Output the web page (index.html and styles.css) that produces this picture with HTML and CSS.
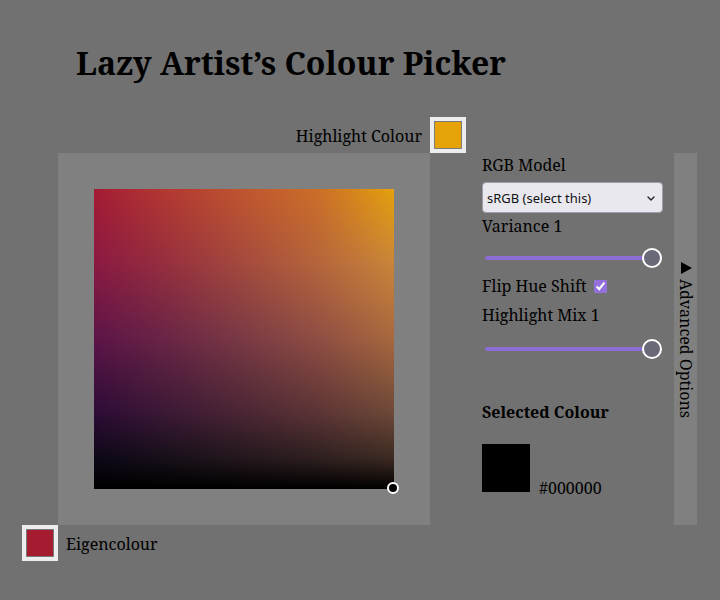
FILE: index.html
```html
<!DOCTYPE html>
<html lang="en">
<head>
<meta charset="utf-8">
<title>Lazy Artist’s Colour Picker</title>
<link rel="stylesheet" href="styles.css">
</head>
<body>
<main class="app">
  <h1 class="title">Lazy Artist’s Colour Picker</h1>
  <div class="layout">
    <label class="highlight-label">Highlight Colour</label>
    <div class="swatch highlight-swatch"><span class="swatch-fill highlight"></span></div>

    <div class="panel">
      <div class="field">
        <span class="band band-1"></span>
        <span class="band band-2"></span>
        <span class="band band-3"></span>
        <span class="band band-4"></span>
        <span class="band band-5"></span>
        <span class="cursor"></span>
      </div>
    </div>

    <div class="swatch eigen-swatch"><span class="swatch-fill eigen"></span></div>
    <label class="eigen-label">Eigencolour</label>

    <div class="controls">
      <label class="ctl-label">RGB Model</label>
      <div class="select-wrap">
        <select class="select"><option>sRGB (select this)</option></select>
        <svg class="chevron" width="8" height="5" viewBox="0 0 8 5"><path d="M1 1l3 3 3-3" fill="none" stroke="#222" stroke-width="1.4" stroke-linecap="round" stroke-linejoin="round"/></svg>
      </div>
      <label class="ctl-label variance">Variance 1</label>
      <input class="slider first-slider" type="range" min="0" max="1" step="0.01" value="1">
      <label class="check-row">Flip Hue Shift <input class="check" type="checkbox" checked></label>
      <label class="ctl-label mix">Highlight Mix 1</label>
      <input class="slider second-slider" type="range" min="0" max="1" step="0.01" value="1">
      <h2 class="selected-title">Selected Colour</h2>
      <div class="result"><span class="result-swatch"></span><span class="result-hex">#000000</span></div>
    </div>

    <div class="advanced">
      <svg class="tri" width="11" height="12" viewBox="0 0 11 12"><path d="M0 0L11 6L0 12z" fill="#000"/></svg>
      <span class="advanced-text">Advanced Options</span>
    </div>
  </div>
</main>
</body>
</html>
```

FILE: styles.css
```css
* { box-sizing: border-box; }
html, body { margin: 0; }
body {
  background: #717171;
  color: #000;
  font-family: "Noto Serif", "DejaVu Serif", serif;
  font-size: 16px;
  line-height: 22px;
}
.app {
  width: 720px;
  height: 600px;
  padding-left: 22px;
}
.title {
  margin: 0 0 32px 0;
  padding: 41px 0 0 54px;
  font-size: 32px;
  line-height: 44px;
  font-weight: 700;
}
.layout {
  display: grid;
  grid-template-columns: 36px 372px 36px 16px 181px 11px 23px;
  grid-template-rows: 36px 372px 36px;
}
.highlight-label {
  grid-column: 2;
  grid-row: 1;
  justify-self: end;
  align-self: center;
  margin-right: 8px;
  margin-top: 2px;
}
.highlight-swatch { grid-column: 3; grid-row: 1; }
.eigen-swatch { grid-column: 1; grid-row: 3; }
.swatch {
  width: 36px;
  height: 36px;
  padding: 4px;
  background: #ededef;
}
.swatch-fill {
  display: block;
  height: 100%;
  border: 1px solid #7b7b7b;
}
.highlight { background: #e6a209; }
.eigen { background: #a51b2f; }
.eigen-label {
  grid-column: 2;
  grid-row: 3;
  align-self: center;
  padding-left: 8px;
  margin-top: 2px;
}
.panel {
  grid-column: 2;
  grid-row: 2;
  background: #808080;
  padding: 36px;
}
.field {
  position: relative;
  width: 300px;
  height: 300px;
  background: linear-gradient(to right, #a51c35 0%, #b43a31 25%, #c0562f 50%, #cc6f28 75%, #e4a10c 100%);
}
.band {
  position: absolute;
  inset: 0;
}
.band-1 {
  background: linear-gradient(to right, #8a1a42 0%, #96303f 25%, #a44a3e 50%, #b5653c 75%, #c9853a 100%);
  -webkit-mask-image: linear-gradient(to bottom, transparent 0%, #000 25%);
  mask-image: linear-gradient(to bottom, transparent 0%, #000 25%);
}
.band-2 {
  background: linear-gradient(to right, #5c1548 0%, #6a2646 25%, #7a3a45 50%, #8f4e44 75%, #a8683e 100%);
  -webkit-mask-image: linear-gradient(to bottom, transparent 25%, #000 50%);
  mask-image: linear-gradient(to bottom, transparent 25%, #000 50%);
}
.band-3 {
  background: linear-gradient(to right, #2c0c36 0%, #3b1935 25%, #4a2634 50%, #5b3435 75%, #6c4838 100%);
  -webkit-mask-image: linear-gradient(to bottom, transparent 50%, #000 75%);
  mask-image: linear-gradient(to bottom, transparent 50%, #000 75%);
}
.band-4 {
  background: linear-gradient(to right, #0d0816 0%, #171019 25%, #22171d 50%, #2d1f1f 75%, #3c2a22 100%);
  -webkit-mask-image: linear-gradient(to bottom, transparent 75%, #000 90%);
  mask-image: linear-gradient(to bottom, transparent 75%, #000 90%);
}
.band-5 {
  background: #000;
  -webkit-mask-image: linear-gradient(to bottom, transparent 90%, #000 100%);
  mask-image: linear-gradient(to bottom, transparent 90%, #000 100%);
}
.cursor {
  position: absolute;
  right: -5px;
  bottom: -5px;
  width: 12px;
  height: 12px;
  border-radius: 50%;
  background: #000;
  border: 2px solid #fff;
}
.controls {
  grid-column: 5;
  grid-row: 2;
  display: flex;
  flex-direction: column;
  align-items: flex-start;
}
.ctl-label { display: block; }
.controls > .ctl-label:first-child { margin-top: 1px; }
.select-wrap {
  position: relative;
  margin-top: 6px;
  width: 181px;
  height: 31px;
}
.select {
  -webkit-appearance: none;
  appearance: none;
  width: 181px;
  height: 31px;
  margin: 0;
  padding: 0 20px 0 4px;
  background: #e9e8ef;
  border: 1px solid #9d9ca8;
  border-radius: 4px;
  font-family: "Noto Sans", "Open Sans", sans-serif;
  font-size: 13px;
  color: #111;
}
.chevron {
  position: absolute;
  right: 8px;
  top: 14px;
  pointer-events: none;
}
.variance { margin-top: 2px; }
.slider {
  -webkit-appearance: none;
  appearance: none;
  display: block;
  width: 177px;
  height: 20px;
  margin: 11px 0 7px 3px;
  padding: 0;
  background: transparent;
}
.slider::-webkit-slider-runnable-track {
  height: 4px;
  background: #8b6dd3;
  border-radius: 2px;
}
.slider::-webkit-slider-thumb {
  -webkit-appearance: none;
  appearance: none;
  width: 20px;
  height: 20px;
  margin-top: -8px;
  border-radius: 50%;
  background: #696977;
  border: 2px solid #fff;
}
.check-row {
  display: flex;
  align-items: center;
  gap: 7px;
}
.check {
  width: 13px;
  height: 13px;
  margin: 0;
  accent-color: #9370db;
}
.mix { margin-top: 7px; }
.second-slider { margin-top: 13px; }
.selected-title {
  margin: 35px 0 0 0;
  font-size: 16px;
  line-height: 22px;
  font-weight: 700;
}
.result {
  margin-top: 21px;
  display: flex;
  align-items: flex-end;
}
.result-swatch {
  display: block;
  width: 48px;
  height: 48px;
  background: #000;
}
.result-hex {
  margin-left: 9px;
  line-height: 16px;
  margin-bottom: -4px;
}
.advanced {
  grid-column: 7;
  grid-row: 2;
  background: #808080;
  display: flex;
  flex-direction: column;
  align-items: center;
  justify-content: center;
  gap: 5px;
  padding-top: 2px;
}
.tri { display: block; margin-left: 1px; }
.advanced-text {
  writing-mode: vertical-rl;
  line-height: 23px;
}
```
